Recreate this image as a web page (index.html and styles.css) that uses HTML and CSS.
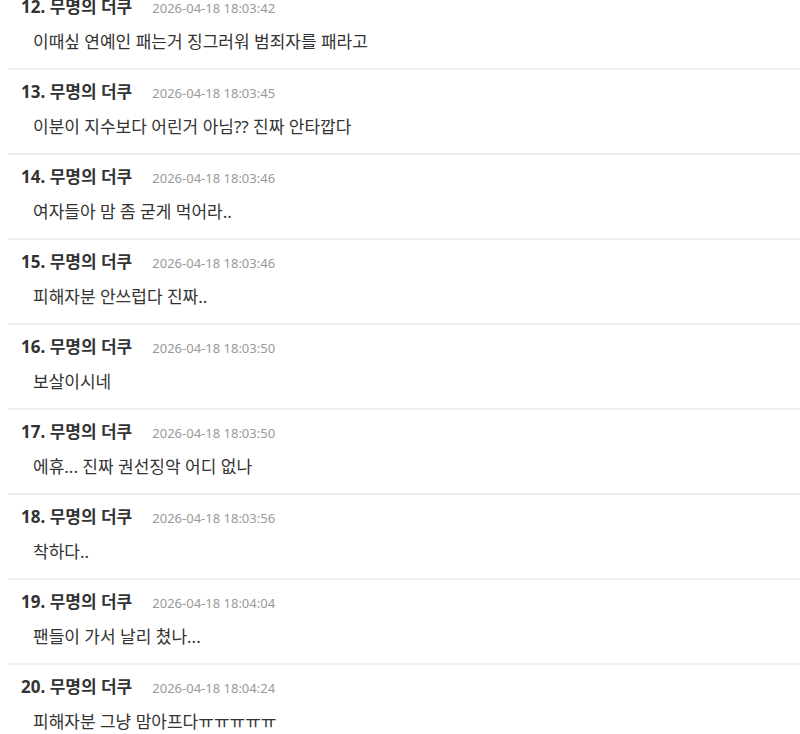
FILE: index.html
```html
<!DOCTYPE html>
<html lang="ko">
<head>
    <meta charset="UTF-8">
    <meta name="viewport" content="width=device-width, initial-scale=1.0">
    <title>댓글</title>
    <link rel="stylesheet" href="styles.css">
</head>
<body>
    <ul class="comments">
        <li class="comment">
            <div class="comment-head"><span class="author">12. 무명의 더쿠</span><span class="date">2026-04-18 18:03:42</span></div>
            <p class="comment-text">이때싶 연예인 패는거 징그러워 범죄자를 패라고</p>
        </li>
        <li class="comment">
            <div class="comment-head"><span class="author">13. 무명의 더쿠</span><span class="date">2026-04-18 18:03:45</span></div>
            <p class="comment-text">이분이 지수보다 어린거 아님?? 진짜 안타깝다</p>
        </li>
        <li class="comment">
            <div class="comment-head"><span class="author">14. 무명의 더쿠</span><span class="date">2026-04-18 18:03:46</span></div>
            <p class="comment-text">여자들아 맘 좀 굳게 먹어라..</p>
        </li>
        <li class="comment">
            <div class="comment-head"><span class="author">15. 무명의 더쿠</span><span class="date">2026-04-18 18:03:46</span></div>
            <p class="comment-text">피해자분 안쓰럽다 진짜..</p>
        </li>
        <li class="comment">
            <div class="comment-head"><span class="author">16. 무명의 더쿠</span><span class="date">2026-04-18 18:03:50</span></div>
            <p class="comment-text">보살이시네</p>
        </li>
        <li class="comment">
            <div class="comment-head"><span class="author">17. 무명의 더쿠</span><span class="date">2026-04-18 18:03:50</span></div>
            <p class="comment-text">에휴... 진짜 권선징악 어디 없나</p>
        </li>
        <li class="comment">
            <div class="comment-head"><span class="author">18. 무명의 더쿠</span><span class="date">2026-04-18 18:03:56</span></div>
            <p class="comment-text">착하다..</p>
        </li>
        <li class="comment">
            <div class="comment-head"><span class="author">19. 무명의 더쿠</span><span class="date">2026-04-18 18:04:04</span></div>
            <p class="comment-text">팬들이 가서 날리 쳤나...</p>
        </li>
        <li class="comment">
            <div class="comment-head"><span class="author">20. 무명의 더쿠</span><span class="date">2026-04-18 18:04:24</span></div>
            <p class="comment-text">피해자분 그냥 맘아프다ㅠㅠㅠㅠㅠ</p>
        </li>
    </ul>
</body>
</html>
```

FILE: styles.css
```css
body {
    margin: 0;
    background: #fff;
    color: #333;
    font-family: "Noto Sans", "Noto Sans CJK KR", sans-serif;
    overflow: hidden;
}

.comments {
    list-style: none;
    margin: -15px 0 0 8px; /* list is scrolled, first row starts above the top */
    padding: 0;
}

.comment {
    padding: 10px 0 14px 13px;
    border-bottom: 2px solid #eee;
}

.comment-head {
    display: flex;
    align-items: baseline;
    gap: 20px;
    height: 24px;
    line-height: 24px;
}

.author {
    font-size: 17px;
    font-weight: bold;
    color: #333;
}

.date {
    font-size: 13px;
    color: #999;
}

.comment-text {
    margin: 11px 0 0 12px;
    font-size: 17px;
    height: 24px;
    line-height: 24px;
    color: #333;
}
```
